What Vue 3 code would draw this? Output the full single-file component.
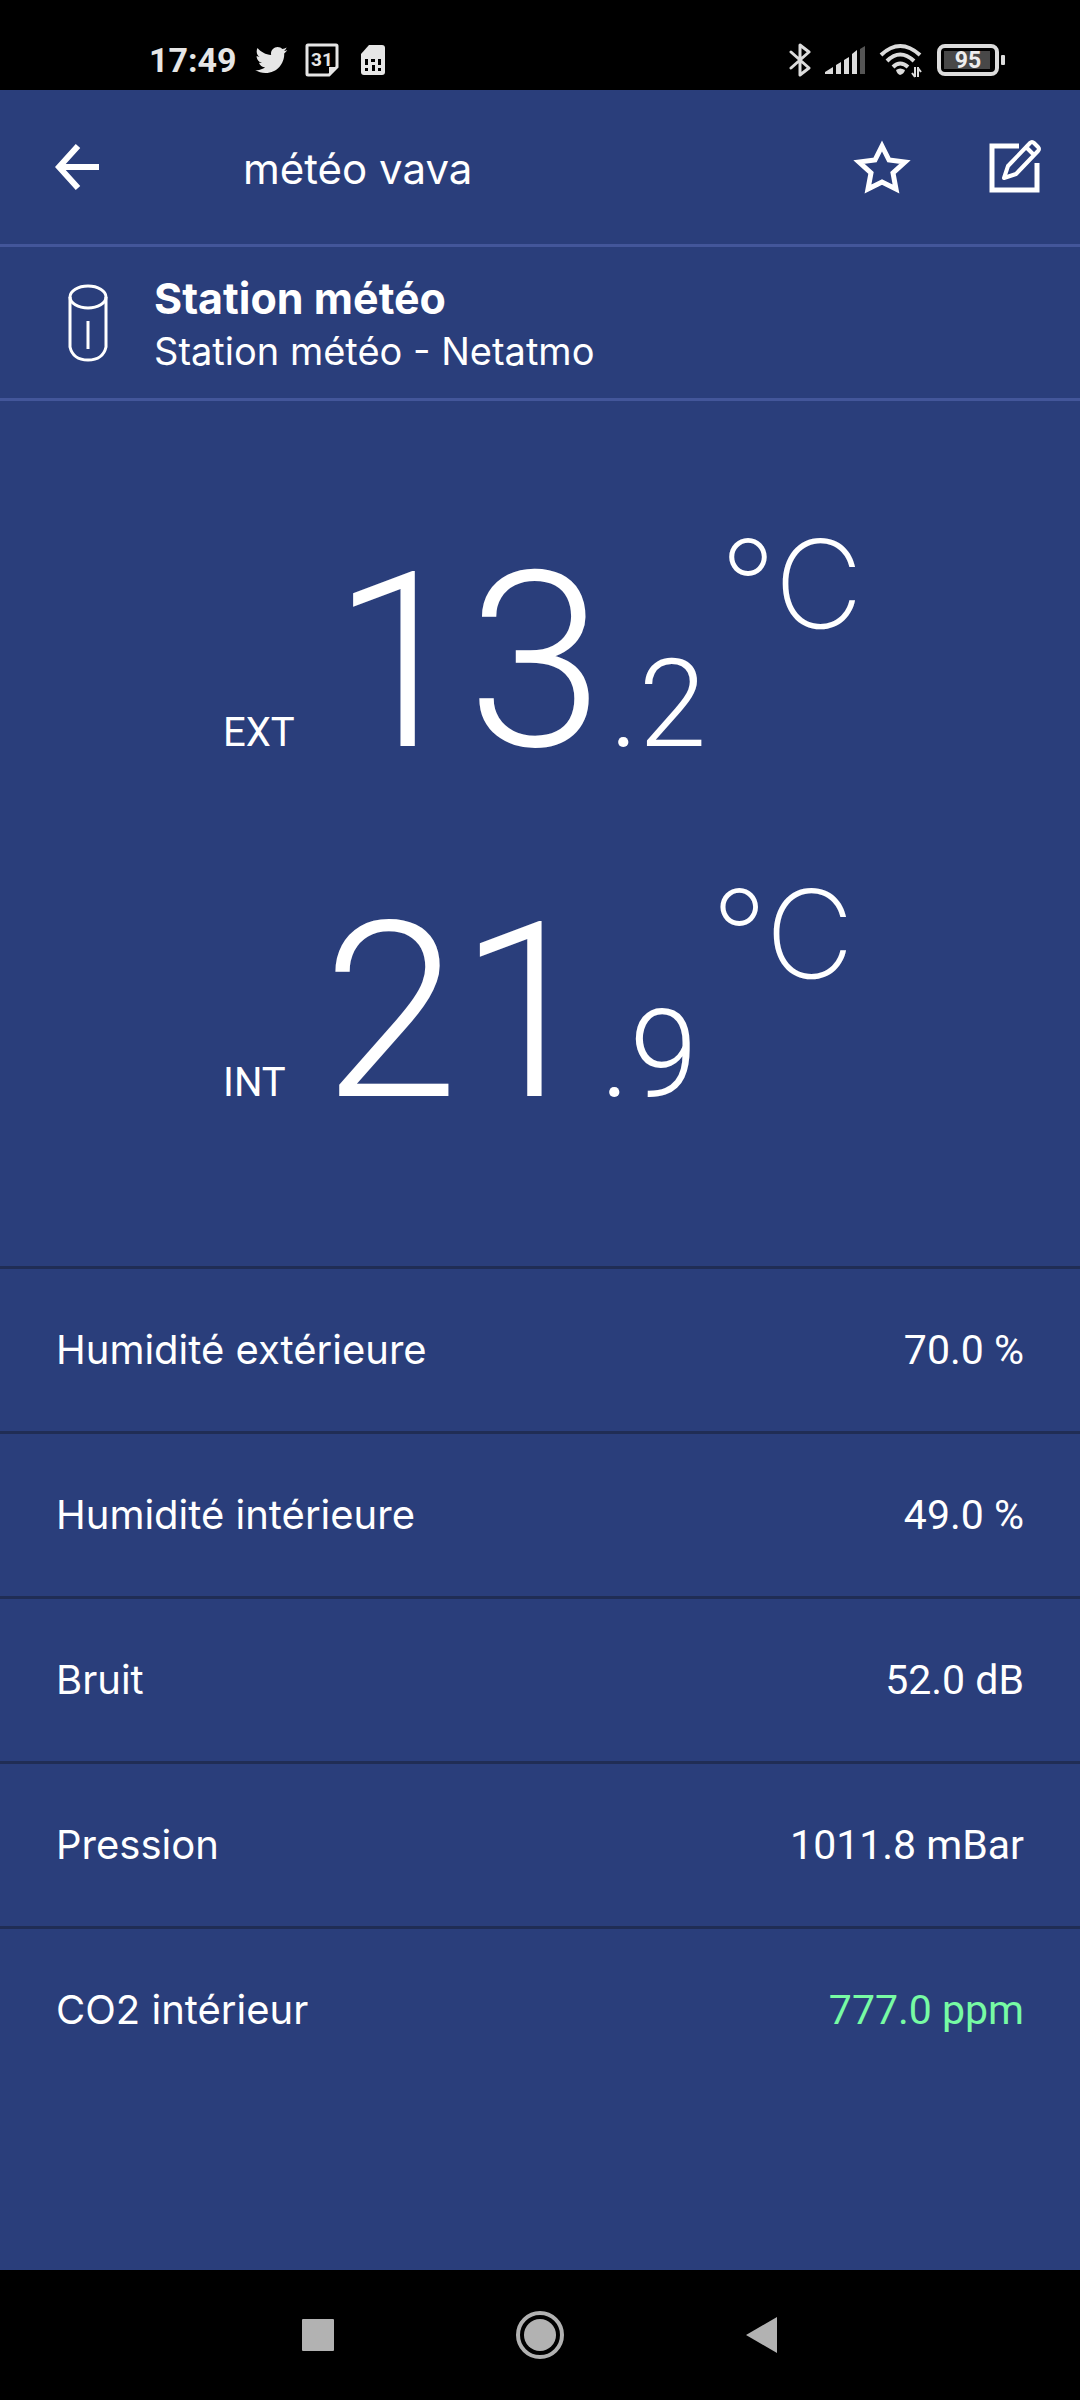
<script setup>
const temperatures = [
  { label: 'EXT', whole: '13', decimal: '.2' },
  { label: 'INT', whole: '21', decimal: '.9' },
]

const measures = [
  { name: 'Humidité extérieure', value: '70.0 %' },
  { name: 'Humidité intérieure', value: '49.0 %' },
  { name: 'Bruit', value: '52.0 dB' },
  { name: 'Pression', value: '1011.8 mBar' },
  { name: 'CO2 intérieur', value: '777.0 ppm', good: true },
]
</script>

<template>
  <div class="screen">
    <div class="status">
      <div class="status-left">
        <span class="clock">17:49</span>
        <svg width="34" height="34" viewBox="0 0 24 24" fill="#e6e6e6">
          <path d="M23.643 4.937c-.835.37-1.732.62-2.675.733.962-.576 1.7-1.49 2.048-2.578-.9.534-1.897.922-2.958 1.13-.85-.904-2.06-1.47-3.4-1.47-2.572 0-4.658 2.086-4.658 4.66 0 .364.042.718.12 1.06-3.873-.195-7.304-2.05-9.602-4.868-.4.69-.63 1.49-.63 2.342 0 1.616.823 3.043 2.072 3.878-.764-.025-1.482-.234-2.11-.583v.06c0 2.257 1.605 4.14 3.737 4.568-.392.106-.803.162-1.227.162-.3 0-.593-.028-.877-.082.593 1.85 2.313 3.198 4.352 3.234-1.595 1.25-3.604 1.995-5.786 1.995-.376 0-.747-.022-1.112-.065 2.062 1.323 4.51 2.093 7.14 2.093 8.57 0 13.255-7.098 13.255-13.254 0-.2-.005-.402-.014-.602.91-.658 1.7-1.477 2.323-2.41z" />
        </svg>
        <svg width="34" height="34" viewBox="0 0 34 34">
          <path d="M3 2H31Q32 2 32 3V24L24 32H3Q2 32 2 31V3Q2 2 3 2Z" fill="none" stroke="#e6e6e6" stroke-width="3" />
          <path d="M24 32V24H32Z" fill="#e6e6e6" />
          <text x="17" y="23" text-anchor="middle" font-family="Roboto, sans-serif" font-size="19" font-weight="700" fill="#e6e6e6">31</text>
        </svg>
        <svg width="30" height="30" viewBox="0 0 30 30">
          <path d="M13 0H26Q29 0 29 3V27Q29 30 26 30H8Q5 30 5 27V9Z" fill="#e6e6e6" />
          <path d="M9 14h3v6H9zM9 23h3v3H9zM15 14h4v3h-4zM16 20h3v6h-3zM22 14h3v6h-3zM22 23h3v3h-3z" fill="#000" />
        </svg>
      </div>
      <div class="status-right">
        <svg width="22" height="36" viewBox="0 0 22 36" fill="none" stroke="#dcdcdc" stroke-width="3" stroke-linejoin="round" stroke-linecap="round">
          <path d="M2 10L20 26L11 33V3L20 10L2 26" />
        </svg>
        <svg width="40" height="30" viewBox="0 0 40 30" fill="#dcdcdc">
          <path d="M0 29V27L8 22V29ZM11 20L16 17V29H11ZM19 15L24 12V29H19ZM27 9L32 5V29H27Z" />
          <path d="M35 4L40 1V29H35Z" fill="#555" />
        </svg>
        <svg width="44" height="36" viewBox="0 0 44 36" fill="none" stroke="#dcdcdc" stroke-width="4">
          <path d="M2 13Q21 -5 41 13M8 19Q21 6 35 19M14 25Q21 18 29 25" />
          <path d="M17 28Q21 25 26 28Q25 32 21 33Q18 32 17 28Z" fill="#dcdcdc" stroke="none" />
          <path d="M36 25V35M33 31L36 35M39 35V25M42 30L39 26" stroke-width="2" />
        </svg>
        <svg width="70" height="32" viewBox="0 0 70 32">
          <rect x="2" y="2" width="58" height="28" rx="6" fill="none" stroke="#dcdcdc" stroke-width="4" />
          <rect x="7" y="7" width="46" height="18" fill="#484848" />
          <rect x="64" y="11" width="4" height="10" rx="1" fill="#dcdcdc" />
          <text x="31" y="24" text-anchor="middle" font-family="Roboto, sans-serif" font-size="23" font-weight="700" fill="#eee">95</text>
        </svg>
      </div>
    </div>

    <header class="bar">
      <button class="icon-button" type="button" aria-label="Retour">
        <svg width="44" height="46" viewBox="0 0 44 46" fill="none" stroke="#fff" stroke-width="6">
          <path d="M23 2L4 23L23 44M3 23H44" />
        </svg>
      </button>
      <h1>météo vava</h1>
      <button class="icon-button" type="button" aria-label="Favori">
        <svg width="60" height="58" viewBox="0 0 60 58" fill="none" stroke="#fff" stroke-width="5">
          <path d="M30 8L37 22L53 24L41 35L44 51L30 44L16 51L19 35L7 24L23 22Z" />
        </svg>
      </button>
      <button class="icon-button" type="button" aria-label="Modifier">
        <svg width="54" height="56" viewBox="0 0 54 56" fill="none" stroke="#fff">
          <path d="M31 7H4V51H49V24" stroke-width="5" />
          <path d="M16 39L20 27L42 4Q44 2 46 4L50 8Q52 10 50 12L28 35ZM38 8L46 16" stroke-width="4" stroke-linejoin="round" />
        </svg>
      </button>
    </header>

    <section class="device">
      <svg width="40" height="78" viewBox="0 0 40 78" fill="none" stroke="#fff" stroke-width="3">
        <ellipse cx="20" cy="13" rx="18" ry="11" />
        <path d="M2 13V63Q5 76 20 76Q35 76 38 63V13M20 37V65" />
      </svg>
      <div>
        <h2>Station météo</h2>
        <p>Station météo - Netatmo</p>
      </div>
    </section>

    <main>
      <section class="temperatures">
        <div v-for="t in temperatures" :key="t.label" class="temperature">
          <span class="place">{{ t.label }}</span>
          <span class="whole">{{ t.whole }}</span>
          <span class="decimal">{{ t.decimal }}</span>
          <span class="unit">°C</span>
        </div>
      </section>

      <dl class="measures">
        <div v-for="m in measures" :key="m.name" class="measure">
          <dt>{{ m.name }}</dt>
          <dd :class="{ good: m.good }">{{ m.value }}</dd>
        </div>
      </dl>
    </main>

    <nav class="system">
      <button type="button" aria-label="Applications récentes">
        <svg width="32" height="32" viewBox="0 0 32 32"><rect width="32" height="32" rx="1" fill="#b2b2b2" /></svg>
      </button>
      <button type="button" aria-label="Accueil">
        <svg width="50" height="50" viewBox="0 0 50 50">
          <circle cx="25" cy="25" r="22" fill="none" stroke="#b2b2b2" stroke-width="4" />
          <circle cx="25" cy="25" r="16" fill="#b2b2b2" />
        </svg>
      </button>
      <button type="button" aria-label="Retour système">
        <svg width="32" height="36" viewBox="0 0 32 36"><path d="M31 0V36L0 18Z" fill="#b2b2b2" /></svg>
      </button>
    </nav>
  </div>
</template>

<style>
body {
  margin: 0;
  background: #2a3e7b;
}
</style>

<style scoped>
.screen {
  display: flex;
  flex-direction: column;
  min-height: 100vh;
  background: #2a3e7b;
  color: #fff;
  font-family: Inter, "Liberation Sans", sans-serif;
  font-size: 40px;
  line-height: 48px;
}
svg {
  display: block;
  flex: none;
}
h1,
h2,
p,
dl,
dd {
  margin: 0;
  font-weight: 400;
}
button {
  display: flex;
  align-items: center;
  justify-content: center;
  padding: 0;
  border: 0;
  background: none;
}
.status {
  display: flex;
  justify-content: space-between;
  align-items: center;
  box-sizing: border-box;
  height: 90px;
  padding: 30px 73px 0 149px;
  background: #000;
}
.status-left,
.status-right {
  display: flex;
  align-items: center;
}
.status-left {
  gap: 17px;
}
.status-right {
  gap: 14px;
}
.clock {
  color: #e6e6e6;
  font: 700 34px/40px Roboto, sans-serif;
}
.bar {
  display: flex;
  align-items: center;
  height: 154px;
  padding: 0 38px 0 55px;
  border-bottom: 3px solid #43569a;
}
.bar h1 {
  flex: 1;
  margin-left: 144px;
  padding-top: 4px;
  font-size: 42px;
}
.bar .icon-button + .icon-button {
  margin-left: 76px;
}
.device {
  display: flex;
  align-items: center;
  gap: 46px;
  padding: 23px 68px 22px;
  border-bottom: 3px solid #43569a;
}
.device h2 {
  font-size: 43px;
  line-height: 56px;
  font-weight: 700;
}
.device p {
  font-size: 38px;
  line-height: 50px;
}
.temperatures {
  padding: 87px 0 78px;
}
.temperature {
  display: flex;
  align-items: baseline;
  height: 350px;
  padding-left: 223px;
  font-family: Roboto, sans-serif;
  font-weight: 300;
}
.place {
  margin-right: 37px;
  font-weight: 400;
}
.whole {
  font-size: 245px;
  line-height: 350px;
}
.decimal,
.unit {
  font-size: 122px;
  line-height: 122px;
}
.decimal {
  margin-left: 6px;
}
.unit {
  align-self: flex-start;
  margin: 35px 0 0 14px;
  font-family: Inter, sans-serif;
  font-weight: 200;
}
.measure {
  display: flex;
  justify-content: space-between;
  align-items: center;
  height: 162px;
  padding: 0 56px;
  border-top: 3px solid #202d55;
}
.measure dd {
  font-family: Roboto, sans-serif;
  font-size: 41px;
}
.good {
  color: #77fba4;
}
.system {
  display: flex;
  justify-content: center;
  gap: 122px;
  height: 130px;
  margin-top: auto;
  background: #000;
}
.system button {
  width: 100px;
}
</style>
